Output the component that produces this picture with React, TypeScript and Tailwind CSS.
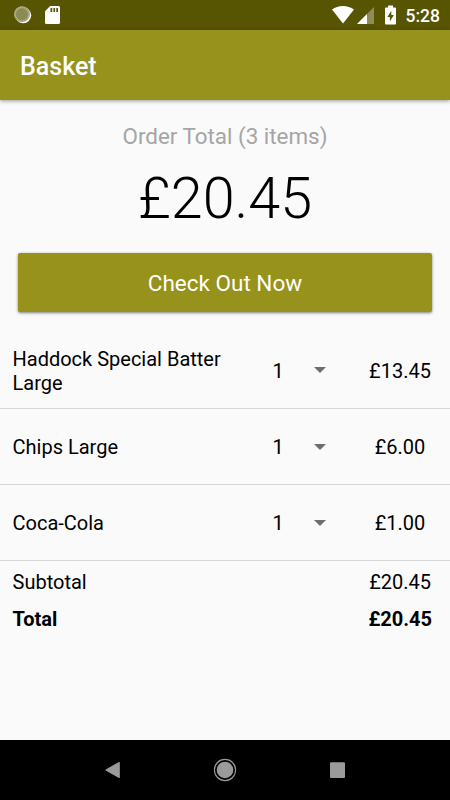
import { useState } from "react";

type BasketItem = {
  name: string;
  quantity: number;
  price: string;
};

const items: BasketItem[] = [
  { name: "Haddock Special Batter Large", quantity: 1, price: "£13.45" },
  { name: "Chips Large", quantity: 1, price: "£6.00" },
  { name: "Coca-Cola", quantity: 1, price: "£1.00" },
];

const StatusBar = () => (
  <div className="flex h-[30px] shrink-0 items-center bg-[#585502] text-white">
    <svg className="ml-[13px] h-[20px] w-[20px]" viewBox="0 0 20 20">
      <circle cx="10.2" cy="10.3" r="8" fill="#fff" />
      <circle cx="9" cy="9.2" r="8" fill="#a3a177" />
      <circle cx="9" cy="9.2" r="6" fill="#8d8b55" />
      <circle
        cx="9"
        cy="9.2"
        r="7"
        fill="none"
        stroke="#b9b893"
        strokeWidth="1.4"
        strokeDasharray="0.8 1.4"
      />
    </svg>
    <svg className="ml-[12px] h-[20px] w-[16px]" viewBox="0 0 16 20">
      <path
        d="M5.2 1H13.5Q15 1 15 2.5V17.5Q15 19 13.5 19H1.5Q0 19 0 17.5V6.2Z"
        fill="#fff"
      />
      <path d="M5.5 3H7.2V7H5.5ZM8.4 3H10.1V7H8.4ZM11.3 3H13V7H11.3Z" fill="#585502" />
    </svg>
    <div className="ml-auto flex items-center pr-[10px]">
      <svg className="h-[20px] w-[22px]" viewBox="0 0 22 20">
        <path d="M0 4.6Q4.7 1 11 1T22 4.6L11 18.5Z" fill="#fff" />
      </svg>
      <svg className="ml-[3px] h-[20px] w-[17px]" viewBox="0 0 17 20">
        <path d="M0 19L17 2V19Z" fill="#8f8d56" />
        <path d="M0 19L10 9V19Z" fill="#fff" />
      </svg>
      <svg className="ml-[11px] h-[20px] w-[11px]" viewBox="0 0 11 20">
        <path
          d="M3 0.5H8V2.5H10Q11 2.5 11 3.5V18.5Q11 19.5 10 19.5H1Q0 19.5 0 18.5V3.5Q0 2.5 1 2.5H3Z"
          fill="#fff"
        />
        <path d="M6.3 5.8L2.4 12H4.9V16.4L8.8 10H6.3Z" fill="#585502" />
      </svg>
      <span className="ml-[10px] pt-[1px] text-[17.5px] leading-[20px] font-medium">5:28</span>
    </div>
  </div>
);

const QuantityPicker = ({ initial }: { initial: number }) => {
  const [quantity, setQuantity] = useState(initial);

  return (
    <button
      onClick={() => setQuantity((prev) => (prev % 9) + 1)}
      aria-label="Change quantity"
      className="flex w-[96px] shrink-0 items-center pl-[12px]"
    >
      <span className="w-[41px] text-left">{quantity}</span>
      <svg className="mb-[1px] h-[6px] w-[12px]" viewBox="0 0 12 6">
        <path d="M0 0H12L6 6Z" fill="#6f6f6f" />
      </svg>
    </button>
  );
};

const NavigationBar = () => (
  <div className="flex h-[60px] shrink-0 items-center justify-center gap-[88px] bg-black">
    <svg className="h-6 w-6" viewBox="0 0 24 24">
      <path
        d="M5 12L18.2 4.6V19.4Z"
        fill="#9b9b9b"
        stroke="#9b9b9b"
        strokeWidth="1.2"
        strokeLinejoin="round"
      />
    </svg>
    <svg className="h-6 w-6" viewBox="0 0 24 24">
      <circle cx="12" cy="12" r="10.6" fill="none" stroke="#9b9b9b" strokeWidth="1.1" />
      <circle cx="12" cy="12" r="8.3" fill="#9b9b9b" />
    </svg>
    <svg className="h-6 w-6" viewBox="0 0 24 24">
      <rect x="5" y="4.3" width="15" height="15.6" rx="1" fill="#9b9b9b" />
    </svg>
  </div>
);

export default function App() {
  return (
    <div className="flex h-[800px] w-[450px] flex-col bg-[#fafafa] font-['Roboto',sans-serif] text-[20px] text-black">
      <StatusBar />
      <header className="flex h-[70px] shrink-0 items-center bg-[#96921c] pt-[4px] pl-[20px] shadow-[0_1px_4px_rgba(0,0,0,0.4)]">
        <h1 className="text-[25px] font-medium text-white">Basket</h1>
      </header>

      <main className="flex grow flex-col">
        <div className="flex flex-col items-center pt-[22px]">
          <p className="text-[22.4px] leading-[28px] text-[#a5a5a5]">Order Total (3 items)</p>
          <p className="mt-[15px] text-[57.5px] leading-[68px] font-light">£20.45</p>
        </div>

        <button className="mx-[18px] mt-[20px] h-[59px] shrink-0 rounded-[2px] bg-[#96921c] pt-[2px] text-[22.5px] text-white shadow-[0_1px_3px_rgba(0,0,0,0.5)]">
          Check Out Now
        </button>

        <ul className="mt-[20.5px]">
          {items.map((item) => (
            <li
              key={item.name}
              className="flex h-[76.25px] items-center border-b border-[#d6d6d6] pt-[1.5px] pl-[12.5px] leading-[24px]"
            >
              <span className="w-[248px] shrink-0 pr-6">{item.name}</span>
              <QuantityPicker initial={item.quantity} />
              <span className="grow pr-[6.5px] text-center">{item.price}</span>
            </li>
          ))}
        </ul>

        <div className="flex justify-between pt-[8.5px] pr-[19px] pl-[12.5px] leading-[24px]">
          <span>Subtotal</span>
          <span>£20.45</span>
        </div>
        <div className="flex justify-between pt-[13px] pr-[18px] pl-[12.5px] leading-[24px] font-bold">
          <span>Total</span>
          <span>£20.45</span>
        </div>
      </main>

      <NavigationBar />
    </div>
  );
}
